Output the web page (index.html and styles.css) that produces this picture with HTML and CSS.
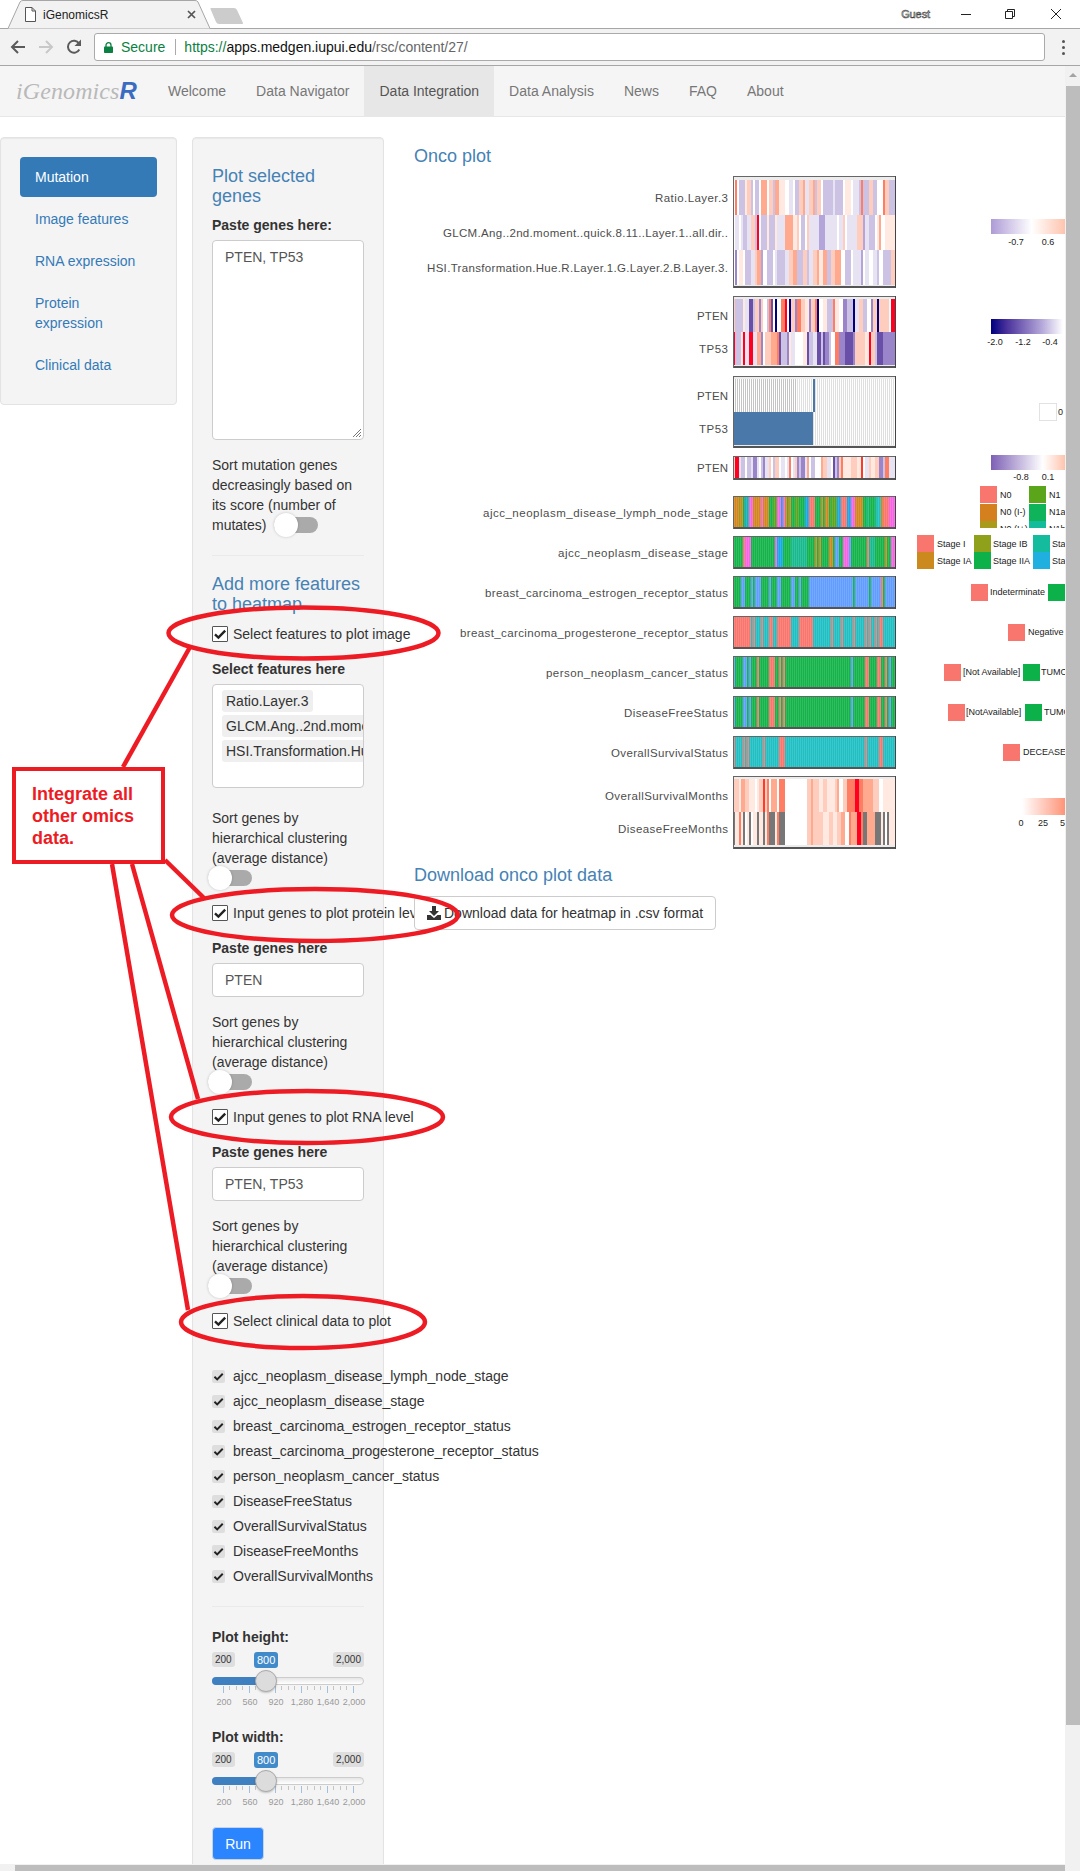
FILE: index.html
```html
<!DOCTYPE html>
<html lang="en">
<head>
<meta charset="utf-8">
<title>iGenomicsR</title>
<link rel="stylesheet" href="styles.css">
</head>
<body>
<svg class="sprite" width="0" height="0" aria-hidden="true">
  <symbol id="chk" viewBox="0 0 16 16"><path d="M3 8.3l3.4 3.2L13.2 4.6" fill="none" stroke="#222" stroke-width="2.4"/></symbol>
</svg>

<header class="tabstrip">
  <div class="tab">
    <svg class="tab-shape" width="206" height="29" viewBox="0 0 206 29"><path d="M0 28.5h3L15 2q1-1.500 3-1.500h172q2 0 3 1.500l12 26.500" fill="#f2f2f2" stroke="#a6a6a6"/></svg>
    <svg class="file-ico" width="11" height="15" viewBox="0 0 11 15"><path d="M.5.500h6.500l3.500 3.500v10.500h-10zM7 .500v3.500h3.500" fill="#fff" stroke="#555"/></svg>
    <span class="tab-title">iGenomicsR</span>
    <svg class="tab-x" width="9" height="9" viewBox="0 0 9 9"><path d="M1 1l7 7M8 1l-7 7" stroke="#555" stroke-width="1.700"/></svg>
  </div>
  <svg class="newtab" width="34" height="18" viewBox="0 0 34 18"><path d="M1 1h23q2 0 3 2l6 13q.500 1-1 1H9q-2 0-3-2L.500 2Q0 1 1 1z" fill="#cccccc"/></svg>
  <div class="winctl">
    <span class="guest">Guest</span>
    <svg width="10" height="10" viewBox="0 0 10 10" class="wc wc-min"><path d="M0 5.500h10" stroke="#222"/></svg>
    <svg width="10" height="10" viewBox="0 0 10 10" class="wc wc-res"><path d="M.500 2.500h7v7h-7zM2.500 2.500v-2h7v7h-2" fill="none" stroke="#222"/></svg>
    <svg width="10" height="10" viewBox="0 0 10 10" class="wc wc-cls"><path d="M0 0l10 10M10 0L0 10" stroke="#222"/></svg>
  </div>
</header>

<div class="toolbar">
  <svg class="tb-ico" width="16" height="14" viewBox="0 0 16 14"><path d="M15 7H2.500M8 1L2 7l6 6" fill="none" stroke="#5a5a5a" stroke-width="2"/></svg>
  <svg class="tb-ico" width="16" height="14" viewBox="0 0 16 14"><path d="M1 7h12.500M8 1l6 6-6 6" fill="none" stroke="#c8c8c8" stroke-width="2"/></svg>
  <svg class="tb-ico" width="16" height="16" viewBox="0 0 16 16"><path d="M13.300 10.500A6 6 0 1 1 13 4.500" fill="none" stroke="#5a5a5a" stroke-width="2"/><path d="M15 .500v6.500H8.500z" fill="#5a5a5a"/></svg>
  <div class="omnibox">
    <svg width="9" height="11" viewBox="0 0 9 11"><path d="M2 5V3.200a2.500 2.500 0 0 1 5 0V5" fill="none" stroke="#0b8043" stroke-width="1.300"/><rect y="4.500" width="9" height="6.500" rx=".8" fill="#0b8043"/></svg>
    <span class="secure">Secure</span>
    <span class="url"><span class="u-g">https://</span><span class="u-d">apps.medgen.iupui.edu</span>/rsc/content/27/</span>
  </div>
  <div class="dots"><i></i><i></i><i></i></div>
</div>

<div class="window">
  <div class="viewport">
    <nav class="navbar">
      <div class="brand"><span class="brand-a">iGenomics</span><span class="brand-b">R</span></div>
      <a class="nav-item">Welcome</a>
      <a class="nav-item">Data Navigator</a>
      <a class="nav-item active">Data Integration</a>
      <a class="nav-item">Data Analysis</a>
      <a class="nav-item">News</a>
      <a class="nav-item">FAQ</a>
      <a class="nav-item">About</a>
    </nav>

    <div class="content">
      <aside class="well well-nav">
        <a class="pill on">Mutation</a>
        <a class="pill">Image features</a>
        <a class="pill">RNA expression</a>
        <a class="pill">Protein expression</a>
        <a class="pill">Clinical data</a>
      </aside>

      <aside class="well well-form">
        <h4 class="sec sec-first">Plot selected genes</h4>
        <div class="lbl lbl-first">Paste genes here:</div>
        <div class="textarea">PTEN, TP53
          <svg class="grip" width="9" height="9" viewBox="0 0 9 9"><path d="M1 9l8-8M4 9l5-5M7 9l2-2" stroke="#777"/></svg>
        </div>
        <p class="desc">Sort mutation genes decreasingly based on its score (number of mutates) <span class="toggle inline"></span></p>
        <hr class="rule">
        <h4 class="sec">Add more features to heatmap</h4>
        <label class="check-row cr-first"><span class="box"><svg width="16" height="16"><use href="#chk"/></svg></span>Select features to plot image</label>
        <div class="lbl">Select features here</div>
        <div class="multi">
          <span class="chip">Ratio.Layer.3</span>
          <span class="chip">GLCM.Ang..2nd.moment..quick.8.11..Layer.1..all.dir..</span>
          <span class="chip">HSI.Transformation.Hue.R.Layer.1.G.Layer.2.B.Layer.3.</span>
        </div>
        <p class="desc desc-gap">Sort genes by hierarchical clustering (average distance)</p>
        <div class="toggle-line"><span class="toggle"></span></div>
        <label class="check-row"><span class="box"><svg width="16" height="16"><use href="#chk"/></svg></span>Input genes to plot protein level</label>
        <div class="lbl">Paste genes here</div>
        <div class="input">PTEN</div>
        <p class="desc">Sort genes by hierarchical clustering (average distance)</p>
        <div class="toggle-line"><span class="toggle"></span></div>
        <label class="check-row"><span class="box"><svg width="16" height="16"><use href="#chk"/></svg></span>Input genes to plot RNA level</label>
        <div class="lbl">Paste genes here</div>
        <div class="input">PTEN, TP53</div>
        <p class="desc">Sort genes by hierarchical clustering (average distance)</p>
        <div class="toggle-line"><span class="toggle"></span></div>
        <label class="check-row"><span class="box"><svg width="16" height="16"><use href="#chk"/></svg></span>Select clinical data to plot</label>
        <ul class="clin">
          <li><span class="mini"><svg width="13" height="13"><use href="#chk"/></svg></span>ajcc_neoplasm_disease_lymph_node_stage</li>
          <li><span class="mini"><svg width="13" height="13"><use href="#chk"/></svg></span>ajcc_neoplasm_disease_stage</li>
          <li><span class="mini"><svg width="13" height="13"><use href="#chk"/></svg></span>breast_carcinoma_estrogen_receptor_status</li>
          <li><span class="mini"><svg width="13" height="13"><use href="#chk"/></svg></span>breast_carcinoma_progesterone_receptor_status</li>
          <li><span class="mini"><svg width="13" height="13"><use href="#chk"/></svg></span>person_neoplasm_cancer_status</li>
          <li><span class="mini"><svg width="13" height="13"><use href="#chk"/></svg></span>DiseaseFreeStatus</li>
          <li><span class="mini"><svg width="13" height="13"><use href="#chk"/></svg></span>OverallSurvivalStatus</li>
          <li><span class="mini"><svg width="13" height="13"><use href="#chk"/></svg></span>DiseaseFreeMonths</li>
          <li><span class="mini"><svg width="13" height="13"><use href="#chk"/></svg></span>OverallSurvivalMonths</li>
        </ul>
        <hr class="rule rule-b">
        <div class="slider">
          <div class="lbl lbl-flat">Plot height:</div>
          <div class="sl-chips"><span class="sl-chip">200</span><span class="sl-chip sl-val">800</span><span class="sl-chip">2,000</span></div>
          <div class="sl-track"><span class="sl-fill"></span><span class="sl-knob"></span></div>
          <div class="sl-ticks"></div>
          <div class="sl-nums"><span>200</span><span>560</span><span>920</span><span>1,280</span><span>1,640</span><span>2,000</span></div>
        </div>
        <div class="slider">
          <div class="lbl lbl-flat">Plot width:</div>
          <div class="sl-chips"><span class="sl-chip">200</span><span class="sl-chip sl-val">800</span><span class="sl-chip">2,000</span></div>
          <div class="sl-track"><span class="sl-fill"></span><span class="sl-knob"></span></div>
          <div class="sl-ticks"></div>
          <div class="sl-nums"><span>200</span><span>560</span><span>920</span><span>1,280</span><span>1,640</span><span>2,000</span></div>
        </div>
        <button class="run" type="button">Run</button>
      </aside>

      <main class="main">
        <h4 class="sec main-title">Onco plot</h4>
        <svg class="plot" width="651" height="695" viewBox="414 170 651 695">
          <defs>
            <linearGradient id="gr1"><stop offset="0" stop-color="#ad9bd6"/><stop offset=".55" stop-color="#fff"/><stop offset="1" stop-color="#ffc4ae"/></linearGradient>
            <linearGradient id="gr2"><stop offset="0" stop-color="#00007f"/><stop offset=".22" stop-color="#4a329b"/><stop offset=".7" stop-color="#b3a6d8"/><stop offset="1" stop-color="#fff"/></linearGradient>
            <linearGradient id="gr4"><stop offset="0" stop-color="#7d60b5"/><stop offset=".7" stop-color="#fff"/><stop offset="1" stop-color="#ffc4ae"/></linearGradient>
            <linearGradient id="gr5"><stop offset="0" stop-color="#fff"/><stop offset="1" stop-color="#ff9478"/></linearGradient>
            <clipPath id="cut"><rect x="900" y="480" width="170" height="48"/></clipPath>
          </defs>

          <g class="track" data-y0="176" data-y1="288">
            <g class="row" data-y="180" data-h="35" data-runs="w1u1w1q3o1s2q1w1q2w1t3w1s2q1t2o3w2l2w1q2s2t1l2s2t1q1s2w1q5l1q4w1o3w1l3q1u1q3s2q2w3u1s2q4"></g>
            <g class="row" data-y="215" data-h="35" data-runs="w1l2w1l1q2l2s2q1R1w1q3o1q3o1l4t4o2s1w1q2w1s1l5p3l3l3w1l2s1w1l5s1s2p1l2q3w1o1t1w2o4"></g>
            <g class="row" data-y="250" data-h="35" data-runs="w1P1w1o2w1q3l2s1t2p1w2q3w1l1q4l2s2t2q3s2q1l2s2t1o2t2q2s2t3w2q3w1l4p1w1l2w2l2q1w2q4s2"></g>
          </g>
          <g class="track" data-y0="296" data-y1="368">
            <g class="row" data-y="299" data-h="33" data-runs="s1q4o1l2M2q1s2P1s1w2q1u1M1w1D1w2u2R1w1D1s2P1u2s2o2P1s2u1D1w2o2q3u1o2w2P2q3D1l2s2q2w2P1s2D1s2s3w1R1"></g>
            <g class="row" data-y="332" data-h="33" data-runs="R1q3o1R1l2R2l2t2P1w1s3t3u1M1q3P1o1l2w4o2M1q2l2M2q1M1P2q1w2u2P3M4P1s5o2R1s2q1M3P4"></g>
          </g>
          <g class="track" data-y0="376" data-y1="448">
            <g class="row" data-y="379" data-h="33" data-runs="z32x8B1x40"></g>
            <g class="row" data-y="412" data-h="33" data-runs="B40x41"></g>
          </g>
          <g class="track" data-y0="456" data-y1="480">
            <g class="row" data-y="457" data-h="22" data-runs="s1R2l1q2w1q1q1l1P2l1w1q1P1l2s1w1q1s2w1l2w1l1u1w1l1s1P1q1P2l1t1w1q2w3t1s2l2w1M1q1P1s1u1o4s3o2v1w1l2s1o2s2P2q1u2l1"></g>
          </g>
          <g class="track" data-y0="496" data-y1="529">
            <g class="row cat" data-y="497" data-h="31" data-runs="c3y1c1g1a1e1m2c4m1c3g2n2m2a1m1c1n1c1g2n2g3a2r3g3c1g1c2g1n3a2r3a2m2c4g2e1g3e1T2c1r3m2"></g>
          </g>
          <g class="track" data-y0="536" data-y1="569">
            <g class="row cat" data-y="537" data-h="31" data-runs="g5r1m3g4g8m1a3g4e4e4g4c1g1c1g4c2g1b2g2m3b1g8r1e3g5c1g2m1"></g>
          </g>
          <g class="track" data-y0="576" data-y1="609">
            <g class="row cat" data-y="577" data-h="31" data-runs="g4b2g3b1g1b3g4b1g3b2g5b2g2b1g4b1b21g1b7g1b5r1g1b5"></g>
          </g>
          <g class="track" data-y0="616" data-y1="649">
            <g class="row cat" data-y="617" data-h="31" data-runs="r9T1r1T3r1T3r2T2r7T4r7T9r1T4r1T5r1T5r1T1r1T2r1T1r2T6"></g>
          </g>
          <g class="track" data-y0="656" data-y1="689">
            <g class="row cat" data-y="657" data-h="31" data-runs="b1g4b2g1b1g3r1g5r3g2r1g1r1g33b1g6r2g4r2g2r1g1b1g2"></g>
          </g>
          <g class="track" data-y0="696" data-y1="729">
            <g class="row cat" data-y="697" data-h="31" data-runs="b1g4b2g1b1g3r1g5r3g2r1g1r1g33b1g6r2g4r2g2r1g1b1g2"></g>
          </g>
          <g class="track" data-y0="736" data-y1="769">
            <g class="row cat" data-y="737" data-h="31" data-runs="r1T4r1T1r1T7r1T7r3T40r1T6r2T6"></g>
          </g>
          <g class="track" data-y0="776" data-y1="849">
            <g class="row" data-y="779" data-h="33" data-runs="s3o1t2s2o3w1o1s2v1s1u1w1t3w1u3w11s2t1s3o2s2o2o2s1t1w2s2u4R2u2t2t3s3w2o6"></g>
            <g class="row" data-y="812" data-h="33" data-runs="k1o2u1o1k1w1o1k1w1o2k1o2k1o1u1k3o1u1k3w11s2t1s5o3s2o2s2t2w2u1t3R2u1k2t4k3o1k1w1k1o2"></g>
          </g>

          <g class="labels">
            <text x="728" y="202" textLength="73">Ratio.Layer.3</text>
            <text x="728" y="237" textLength="285">GLCM.Ang..2nd.moment..quick.8.11..Layer.1..all.dir..</text>
            <text x="728" y="272" textLength="301">HSI.Transformation.Hue.R.Layer.1.G.Layer.2.B.Layer.3.</text>
            <text x="728" y="320" textLength="31">PTEN</text>
            <text x="728" y="353" textLength="29">TP53</text>
            <text x="728" y="400" textLength="31">PTEN</text>
            <text x="728" y="433" textLength="29">TP53</text>
            <text x="728" y="472" textLength="31">PTEN</text>
            <text x="728" y="517" textLength="245">ajcc_neoplasm_disease_lymph_node_stage</text>
            <text x="728" y="557" textLength="170">ajcc_neoplasm_disease_stage</text>
            <text x="728" y="597" textLength="243">breast_carcinoma_estrogen_receptor_status</text>
            <text x="728" y="637" textLength="268">breast_carcinoma_progesterone_receptor_status</text>
            <text x="728" y="677" textLength="182">person_neoplasm_cancer_status</text>
            <text x="728" y="717" textLength="104">DiseaseFreeStatus</text>
            <text x="728" y="757" textLength="117">OverallSurvivalStatus</text>
            <text x="728" y="800" textLength="123">OverallSurvivalMonths</text>
            <text x="728" y="833" textLength="110">DiseaseFreeMonths</text>
          </g>

          <g class="legend">
            <rect x="991" y="219" width="74" height="15" fill="url(#gr1)"/>
            <text class="mid" x="1016" y="245">-0.7</text><text class="mid" x="1048" y="245">0.6</text>
            <rect x="991" y="319" width="72" height="15" fill="url(#gr2)"/>
            <text class="mid" x="995" y="345">-2.0</text><text class="mid" x="1023" y="345">-1.2</text><text class="mid" x="1050" y="345">-0.4</text>
            <rect x="1039.500" y="403.500" width="17" height="17" fill="#fff" stroke="#e2e2e2"/>
            <text x="1058" y="415">0</text>
            <rect x="991" y="455" width="74" height="15" fill="url(#gr4)"/>
            <text class="mid" x="1021" y="480">-0.8</text><text class="mid" x="1048" y="480">0.1</text>

            <g clip-path="url(#cut)">
              <rect x="980" y="486" width="17" height="17" fill="#f8766d"/><text x="1000" y="498">N0</text>
              <rect x="980" y="504" width="17" height="17" fill="#d4801f"/><text x="1000" y="515">N0 (I-)</text>
              <rect x="980" y="521" width="17" height="17" fill="#a89a1a"/><text x="1000" y="532">N0 (I+)</text>
              <rect x="1029" y="486" width="17" height="17" fill="#5ba51a"/><text x="1049" y="498">N1</text>
              <rect x="1029" y="504" width="17" height="17" fill="#0fb45a"/><text x="1049" y="515">N1a</text>
              <rect x="1029" y="521" width="17" height="17" fill="#14bc9c"/><text x="1049" y="532">N1b</text>
            </g>

            <rect x="917" y="535" width="17" height="17" fill="#f8766d"/><text x="937" y="547">Stage I</text>
            <rect x="917" y="552" width="17" height="17" fill="#cc8a1e"/><text x="937" y="564">Stage IA</text>
            <rect x="974" y="535" width="17" height="17" fill="#8fa01b"/><text x="993" y="547">Stage IB</text>
            <rect x="974" y="552" width="17" height="17" fill="#0cb14a"/><text x="993" y="564">Stage IIA</text>
            <rect x="1033" y="535" width="17" height="17" fill="#15bb9d"/><text x="1052" y="547">Stage IIB</text>
            <rect x="1033" y="552" width="17" height="17" fill="#1fb0e0"/><text x="1052" y="564">Stage III</text>

            <rect x="971" y="584" width="17" height="17" fill="#f8766d"/><text x="990" y="595">Indeterminate</text>
            <rect x="1048" y="584" width="17" height="17" fill="#0cb14a"/>
            <rect x="1008" y="624" width="17" height="17" fill="#f8766d"/><text x="1028" y="635">Negative</text>
            <rect x="944" y="664" width="17" height="17" fill="#f8766d"/><text x="963" y="675">[Not Available]</text>
            <rect x="1023" y="664" width="17" height="17" fill="#0cb14a"/><text x="1041" y="675">TUMOR FREE</text>
            <rect x="948" y="704" width="17" height="17" fill="#f8766d"/><text x="966" y="715">[NotAvailable]</text>
            <rect x="1025" y="704" width="17" height="17" fill="#0cb14a"/><text x="1044" y="715">TUMOR FREE</text>
            <rect x="1003" y="744" width="17" height="17" fill="#f8766d"/><text x="1023" y="755">DECEASED</text>

            <rect x="1022" y="798" width="43" height="17" fill="url(#gr5)"/>
            <text class="mid" x="1021" y="826">0</text><text class="mid" x="1043" y="826">25</text><text class="mid" x="1065" y="826">50</text>
          </g>
        </svg>
        <h4 class="sec dl-title">Download onco plot data</h4>
        <button class="dl-btn" type="button">
          <svg width="14" height="14" viewBox="0 0 14 14"><path d="M5 0h4v5h3L7 10 2 5h3z" fill="#333"/><path d="M0 9h3.500L7 12l3.500-3H14v5H0z" fill="#333"/></svg>
          Download data for heatmap in .csv format
        </button>
      </main>
    </div>
  </div>

  <div class="vscroll">
    <span class="vs-arrow"></span>
    <span class="vs-thumb"></span>
  </div>
</div>
<div class="hscroll"><span class="hs-thumb"></span></div>

<svg class="notes" width="1080" height="1871" viewBox="0 0 1080 1871" aria-hidden="true">
  <g class="note-lines">
    <path d="M190 647L123 767"/>
    <path d="M165 860L204 898"/>
    <path d="M132 864L198 1099"/>
    <path d="M112 864L188 1310"/>
    <ellipse cx="303.500" cy="633" rx="135" ry="25.500"/>
    <ellipse cx="315" cy="915" rx="143" ry="26"/>
    <ellipse cx="307" cy="1117" rx="136" ry="26"/>
    <ellipse cx="303" cy="1322" rx="122" ry="26"/>
  </g>
</svg>
<div class="callout">Integrate all other omics data.</div>

<script src="app.js"></script>
</body>
</html>
```

FILE: styles.css
```css
* { box-sizing: border-box; }
html, body { margin: 0; padding: 0; }
body {
  position: relative;
  width: 1080px;
  height: 1871px;
  overflow: hidden;
  background: #fff;
  color: #333;
  font: 14px/20px "Liberation Sans", Arial, sans-serif;
}
.sprite { position: absolute; }

/* browser chrome */
.tabstrip { display: flex; align-items: flex-start; height: 28px; background: #fff; }
.tab {
  position: relative;
  z-index: 1;
  display: flex;
  align-items: center;
  width: 206px;
  height: 29px;
  margin-left: 5px;
  padding-left: 20px;
}
.tab-shape { position: absolute; left: 0; top: 0; z-index: -1; }
.tab-title { margin-left: 7px; font-size: 12px; color: #222; }
.tab-x { margin-left: 79px; }
.newtab { margin: 7px 0 0 -1px; }
.winctl { display: flex; align-items: center; margin-left: auto; height: 28px; }
.guest { margin-right: 31px; font-size: 11px; color: #fff; -webkit-text-stroke: .6px #444; letter-spacing: -.1px; }
.wc-min { margin-right: 34px; }
.wc-res { margin-right: 36px; }
.wc-cls { margin-right: 19px; }

.toolbar {
  display: flex;
  align-items: center;
  height: 38px;
  background: #f2f2f2;
  border-top: 1px solid #a6a6a6;
  border-bottom: 1px solid #a6a6a6;
  padding-left: 10px;
}
.tb-ico { margin-right: 12px; }
.omnibox {
  display: flex;
  align-items: center;
  width: 951px;
  height: 28px;
  margin-left: 0;
  padding-left: 9px;
  background: #fff;
  border: 1px solid #aaa;
  border-radius: 3px;
}
.secure { margin-left: 8px; padding-right: 10px; margin-right: 8px; border-right: 1px solid #aaa; line-height: 16px; color: #0b8043; }
.url { color: #666; }
.u-g { color: #0b8043; }
.u-d { color: #111; }
.dots { display: flex; flex-direction: column; gap: 3px; margin-left: 17px; }
.dots i { width: 3px; height: 3px; border-radius: 50%; background: #555; }

/* window frame */
.window { display: flex; height: 1798px; }
.viewport { flex: 1; min-width: 0; overflow: hidden; }
.vscroll { position: relative; width: 15px; background: #f1f1f1; }
.vs-arrow {
  display: block;
  width: 0;
  margin: 7px auto 0;
  border: 4px solid transparent;
  border-top: 0;
  border-bottom: 4px solid #a3a3a3;
}
.vs-thumb { display: block; height: 1639px; margin: 9px 0 0 1px; background: #bdbdbd; }
.hscroll { height: 7px; padding-top: 1px; background: #f1f1f1; }
.hs-thumb { display: block; height: 6px; width: 1050px; margin-left: 15px; background: #bdbdbd; }

/* navbar */
.navbar { display: flex; height: 51px; background: #f5f5f5; border-bottom: 1px solid #e7e7e7; }
.brand { width: 153px; padding-left: 16px; line-height: 46px; white-space: nowrap; }
.brand-a { font: italic 24px/50px "Liberation Serif", serif; color: #b9b9b9; letter-spacing: .1px; }
.brand-b { font: italic bold 24px/50px "Liberation Sans", sans-serif; color: #3a6cc0; }
.nav-item { padding: 15px; color: #777; }
.nav-item.active { background: #e7e7e7; color: #555; }

/* layout */
.content { display: flex; align-items: flex-start; padding-top: 20px; }
.well {
  background: #f4f4f4;
  border: 1px solid #e3e3e3;
  border-radius: 4px;
  box-shadow: inset 0 1px 1px rgba(0,0,0,.05);
  padding: 19px;
}
.well-nav { flex: 0 0 177px; margin-right: 15px; display: flex; flex-direction: column; gap: 2px; }
.pill { display: block; padding: 10px 15px; color: #337ab7; border-radius: 4px; }
.pill.on { background: #337ab7; color: #fff; }
.well-form { flex: 0 0 192px; min-width: 0; width: 192px; margin-right: 30px; }
.main { position: relative; flex: 1; min-width: 0; }

/* form */
.sec { margin: 0; font-size: 18px; font-weight: 500; line-height: 19.8px; color: #4682b4; }
.sec-first { margin-top: 10px; }
.lbl { margin-top: 15px; margin-bottom: 5px; font-weight: bold; white-space: nowrap; }
.lbl-first { margin-top: 8.400px; }
.lbl-flat { margin-top: 0; margin-bottom: 5px; }
.textarea {
  position: relative;
  height: 200px;
  padding: 6px 12px;
  background: #fff;
  border: 1px solid #ccc;
  border-radius: 4px;
  color: #555;
}
.grip { position: absolute; right: 2px; bottom: 2px; }
.desc { margin: 15px 0 0; }
.desc-gap { margin-top: 20px; }
.rule { height: 1px; margin: 20px 0 19px; border: 0; background: #eaeaea; }
.rule-b { margin: 20px 0; }
.toggle {
  position: relative;
  display: block;
  width: 44px;
  height: 16px;
  background: #aaa;
  border-radius: 8px;
}
.toggle::after {
  content: "";
  position: absolute;
  left: 0;
  top: -4px;
  width: 24px;
  height: 24px;
  background: #fff;
  border-radius: 50%;
  box-shadow: 0 0 3px rgba(0,0,0,.2);
}
.toggle.inline { display: inline-block; margin-left: 4px; vertical-align: -3px; }
.toggle-line { height: 20px; padding-top: 2px; margin-left: -4px; }
.check-row { display: flex; align-items: center; margin-top: 15px; white-space: nowrap; }
.cr-first { margin-top: 9.600px; }
.box {
  flex: none;
  width: 16px;
  height: 16px;
  margin-right: 5px;
  background: #fff;
  border: 1px solid #555;
  border-radius: 1px;
}
.box svg { display: block; margin: -1px; }
.multi {
  display: flex;
  flex-direction: column;
  align-items: flex-start;
  gap: 3px;
  height: 104px;
  padding: 5px 0 0 9px;
  background: #fff;
  border: 1px solid #ccc;
  border-radius: 4px;
  overflow: hidden;
}
.chip {
  flex: none;
  height: 22px;
  padding: 0 4px;
  line-height: 22px;
  white-space: nowrap;
  background: #efefef;
  border-radius: 3px;
}
.input {
  height: 34px;
  padding: 6px 12px;
  background: #fff;
  border: 1px solid #ccc;
  border-radius: 4px;
  color: #555;
}
.clin { display: flex; flex-direction: column; gap: 5px; margin: 35px 0 0; padding: 0; list-style: none; }
.clin li { display: flex; align-items: center; white-space: nowrap; }
.mini { flex: none; width: 13px; height: 13px; margin-right: 8px; background: #dedede; border-radius: 2px; }
.mini svg { display: block; }

/* sliders */
.slider { height: 85px; margin-bottom: 15px; }
.sl-chips { position: relative; display: flex; justify-content: space-between; }
.sl-chip {
  height: 15px;
  padding: 0 3px;
  font-size: 10px;
  line-height: 15px;
  background: #dedede;
  border-radius: 3px;
}
.sl-val {
  position: absolute;
  left: 42px;
  height: 16px;
  font-size: 11px;
  line-height: 16px;
  background: #428bca;
  color: #fff;
}
.sl-track {
  position: relative;
  height: 8px;
  margin-top: 10px;
  background: linear-gradient(#e6e6e6, #fff);
  border: 1px solid #ccc;
  border-radius: 4px;
}
.sl-fill {
  position: absolute;
  left: -1px;
  top: -1px;
  width: 52px;
  height: 8px;
  background: #3f80c0;
  border-radius: 4px 0 0 4px;
}
.sl-knob {
  position: absolute;
  left: 42px;
  top: -8px;
  width: 22px;
  height: 22px;
  background: #dcdcdc;
  border: 1px solid #aaa;
  border-radius: 50%;
  box-shadow: 0 1px 2px rgba(0,0,0,.2);
}
.sl-ticks {
  width: 131px;
  height: 7px;
  margin: 1px 0 0 11px;
  background-image:
    repeating-linear-gradient(90deg, #a4bfdc 0 1px, transparent 1px 26px),
    repeating-linear-gradient(90deg, #c4c4c4 0 1px, transparent 1px 6.500px);
  background-size: 100% 7px, 100% 4px;
  background-repeat: no-repeat;
}
.sl-nums { display: flex; margin: 3px 0 0 -1px; font-size: 9px; line-height: 12px; color: #999; white-space: nowrap; }
.sl-nums span { flex: 0 0 26px; display: flex; justify-content: center; }
.run {
  display: block;
  width: 52px;
  height: 33px;
  padding: 0;
  font: inherit;
  color: #fff;
  background: #2a85ff;
  border: 1px solid #c8d4e4;
  border-radius: 4px;
}

/* main */
.main-title { margin-top: 10px; }
.plot { display: block; margin-top: 3px; overflow: hidden; }
.plot rect { shape-rendering: crispEdges; }
.labels text {
  font: 11.500px "Liberation Sans", sans-serif;
  fill: #4d4d4d;
  text-anchor: end;
}
.legend text { font: 9px "Liberation Sans", sans-serif; fill: #222; }
.legend text.mid { text-anchor: middle; }
.dl-title { line-height: 20px; }
.dl-btn {
  display: inline-flex;
  align-items: center;
  gap: 3px;
  height: 34px;
  margin-top: 11px;
  padding: 0 12px;
  font: inherit;
  color: #333;
  background: #fff;
  border: 1px solid #ccc;
  border-radius: 4px;
  white-space: nowrap;
}

/* red annotations */
.notes { position: absolute; left: 0; top: 0; pointer-events: none; }
.note-lines path, .note-lines ellipse { fill: none; stroke: #ed1c24; stroke-width: 4.500; }
.callout {
  position: absolute;
  left: 12px;
  top: 767px;
  width: 153px;
  height: 97px;
  padding: 12px 16px;
  background: #fff;
  border: 4.500px solid #ed1c24;
  color: #ed1c24;
  font-size: 18px;
  font-weight: bold;
  line-height: 22px;
}
```

FILE: app.js
```js
// Draws the onco plot tracks from the run-length colour strings in the markup.
var SVG_NS = "http://www.w3.org/2000/svg";
var X0 = 733, CELL = 2, CELLS = 81;
var COLORS = {
  w: "#ffffff", l: "#e8e3f3", q: "#cbc2e4", p: "#b3a4d9", P: "#9a85cb", M: "#6a4fa8", D: "#00007f",
  o: "#ffe9e1", s: "#ffcdbd", t: "#ffa98f", u: "#ff7d63", v: "#ff3a28", R: "#ff0020", k: "#777777",
  c: "#d4861e", y: "#9d9a1b", g: "#14b44a", b: "#619cff", a: "#18a8e6", T: "#1fbfc4",
  m: "#f564e3", r: "#f8766d", n: "#5ca51f", e: "#17b98f", B: "#4a78a8"
};
var STRIPES = { z: "#c4c4c4", x: "#dfdfdf" };

function rect(parent, x, y, w, h, fill, opacity) {
  var r = document.createElementNS(SVG_NS, "rect");
  r.setAttribute("x", x);
  r.setAttribute("y", y);
  r.setAttribute("width", w);
  r.setAttribute("height", h);
  r.setAttribute("fill", fill);
  if (opacity) r.setAttribute("fill-opacity", opacity);
  parent.appendChild(r);
}

function drawRow(row) {
  var y = +row.dataset.y, h = +row.dataset.h, cat = row.classList.contains("cat");
  var i = 0, last = "w", m, re = /([A-Za-z])(\d+)/g;
  var cells = [];
  while ((m = re.exec(row.dataset.runs))) {
    for (var n = 0; n < +m[2]; n++) cells.push(m[1]);
    last = m[1];
  }
  while (cells.length < CELLS) cells.push(last);
  for (i = 0; i < CELLS; i++) {
    var x = X0 + i * CELL, c = cells[i];
    if (STRIPES[c]) {
      rect(row, x, y, CELL, h, "#fff");
      rect(row, x, y, 1, h, STRIPES[c]);
    } else {
      rect(row, x, y, CELL, h, COLORS[c]);
      if (cat) rect(row, x + 1, y, 1, h, "#fff", 0.13);
    }
  }
}

document.querySelectorAll(".track").forEach(function (t) {
  var y0 = +t.dataset.y0, y1 = +t.dataset.y1;
  var bg = document.createElementNS(SVG_NS, "g");
  t.insertBefore(bg, t.firstChild);
  rect(bg, X0, y0, 163, y1 - y0, "#ececec");
  t.querySelectorAll(".row").forEach(drawRow);
  rect(t, X0, y0, 163, 1, "#666");
  rect(t, X0, y1 - 2, 163, 2, "#555");
  rect(t, X0, y0, 1, y1 - y0, "#666");
  rect(t, X0 + 162, y0, 1, y1 - y0, "#444");
});
```
